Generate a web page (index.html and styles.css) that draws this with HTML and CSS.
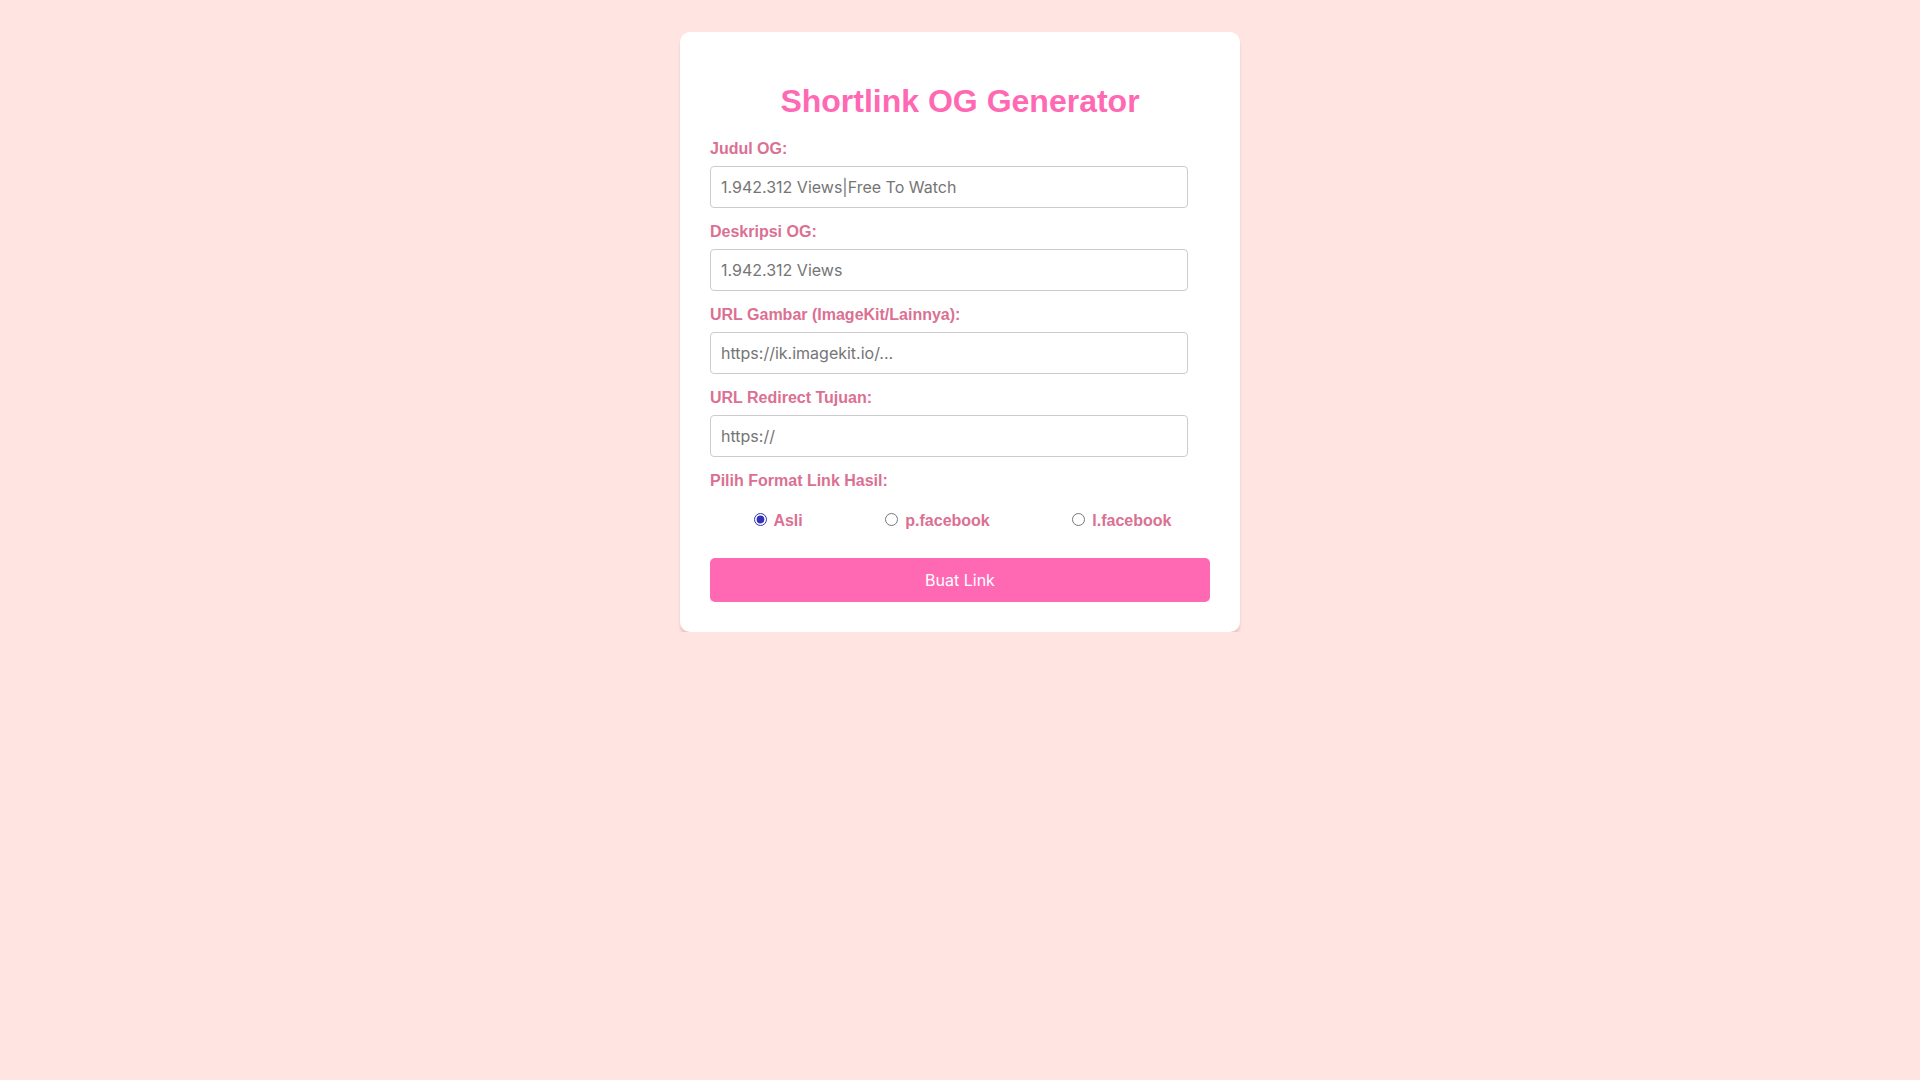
FILE: index.html
```html
<!DOCTYPE html>
<html lang="id">
<head>
<meta charset="utf-8">
<title>Shortlink OG Generator</title>
<link rel="stylesheet" href="styles.css">
</head>
<body>
<div class="card">
  <h1 class="title">Shortlink OG Generator</h1>
  <form class="form">
    <label class="field-label" for="judul">Judul OG:</label>
    <input class="field" id="judul" type="text" placeholder="1.942.312 Views|Free To Watch">
    <label class="field-label" for="desk">Deskripsi OG:</label>
    <input class="field" id="desk" type="text" placeholder="1.942.312 Views">
    <label class="field-label" for="gambar">URL Gambar (ImageKit/Lainnya):</label>
    <input class="field" id="gambar" type="text" placeholder="https://ik.imagekit.io/...">
    <label class="field-label" for="redirect">URL Redirect Tujuan:</label>
    <input class="field" id="redirect" type="text" placeholder="https://">
    <label class="field-label">Pilih Format Link Hasil:</label>
    <div class="radio-group">
      <label class="radio-label"><input class="radio" type="radio" name="fmt" checked> Asli</label>
      <label class="radio-label"><input class="radio" type="radio" name="fmt"> p.facebook</label>
      <label class="radio-label"><input class="radio" type="radio" name="fmt"> l.facebook</label>
    </div>
    <button class="btn" type="button">Buat Link</button>
  </form>
</div>
</body>
</html>
```
FILE: styles.css
```css
html, body {
  margin: 0;
  padding: 0;
}
body {
  background: #ffe4e1;
  font-family: "Liberation Sans", Arial, sans-serif;
  padding-top: 32px;
}
.card {
  width: 500px;
  margin: 0 auto;
  background: #ffffff;
  padding: 30px;
  border-radius: 10px;
  box-shadow: 0 4px 3px rgba(0, 0, 0, 0.12);
}
.title {
  margin: 21px 0 20px;
  font-size: 32px;
  font-weight: bold;
  text-align: center;
  color: #ff69b4;
}
.form {
  display: flex;
  flex-direction: column;
  align-items: flex-start;
}
.field-label {
  display: block;
  font-size: 16px;
  font-weight: bold;
  color: #db7093;
  margin-bottom: 8px;
}
.field {
  box-sizing: border-box;
  width: calc(100% - 22px);
  padding: 10px;
  border: 1px solid #cccccc;
  border-radius: 4px;
  font-family: Inter, "Noto Sans", sans-serif;
  font-size: 16px;
  color: #333;
  margin: 0 0 15px;
  background: #fff;
}
.field::placeholder {
  color: #757575;
}
.radio-group {
  align-self: stretch;
  display: flex;
  justify-content: space-around;
  margin: 2px 0 18px;
  padding: 10px 0;
}
.radio-label {
  font-size: 16px;
  font-weight: bold;
  color: #db7093;
}
.radio {
  accent-color: #3232b6;
}
.btn {
  align-self: stretch;
  background: #ff69b4;
  color: #ffffff;
  border: none;
  border-radius: 5px;
  padding: 12px;
  font-family: Inter, "Noto Sans", sans-serif;
  font-size: 16px;
}
```
